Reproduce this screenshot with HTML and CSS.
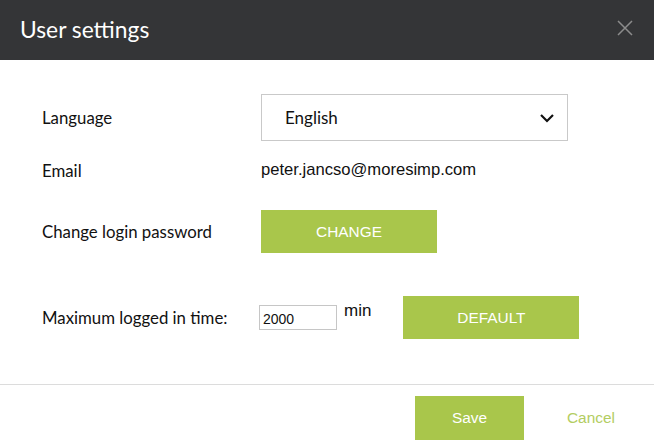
FILE: index.html
```html
<!DOCTYPE html>
<html lang="en">
<head>
    <meta charset="UTF-8">
    <title>User settings</title>
    <link rel="stylesheet" href="styles.css">
</head>
<body>

    <div class="modal">
        <!-- Header -->
        <div class="modal-header">
            <h1>User settings</h1>
            <button class="close" aria-label="Close">
                <svg width="16" height="16" viewBox="0 0 16 16">
                    <path d="M1 1 L15 15 M15 1 L1 15" stroke="#8c8c8c" stroke-width="1.5" fill="none"/>
                </svg>
            </button>
        </div>

        <!-- Settings -->
        <div class="modal-body">
            <div class="row row-language">
                <div class="label">Language</div>
                <div class="select">
                    <span>English</span>
                    <svg width="16" height="10" viewBox="0 0 16 10">
                        <polyline points="2,2 8,8 14,2" stroke="#111" stroke-width="2.2" fill="none"/>
                    </svg>
                </div>
            </div>

            <div class="row row-email">
                <div class="label">Email</div>
                <div class="value">peter.jancso@moresimp.com</div>
            </div>

            <div class="row row-password">
                <div class="label">Change login password</div>
                <button class="btn btn-wide">CHANGE</button>
            </div>

            <div class="row row-time">
                <div class="label">Maximum logged in time:</div>
                <input class="time-input" type="text" value="2000">
                <span class="unit">min</span>
                <button class="btn btn-wide">DEFAULT</button>
            </div>
        </div>

        <!-- Footer -->
        <div class="modal-footer">
            <button class="btn btn-save">Save</button>
            <a class="cancel" href="#">Cancel</a>
        </div>
    </div>

</body>
</html>
```

FILE: styles.css
```css
* {
    margin: 0;
    padding: 0;
    box-sizing: border-box;
}

body {
    font-family: 'Lato', sans-serif;
    background-color: #fff;
    color: #111;
    width: 654px;
    height: 448px;
    overflow: hidden;
}

/* Header */
.modal-header {
    height: 60px;
    background-color: #343537;
    display: flex;
    align-items: center;
    justify-content: space-between;
    padding: 0 21px 0 20px;
}

.modal-header h1 {
    color: #fff;
    font-size: 22.8px;
    font-weight: 400;
    margin-top: -2px;
}

.close {
    background: none;
    border: none;
    width: 16px;
    height: 16px;
    display: flex;
    margin-top: -4px;
}

/* Body */
.modal-body {
    padding: 0 0 45px 42px;
    border-bottom: 1px solid #dcdcdc;
}

.row {
    display: flex;
    align-items: center;
}

.label {
    width: 219px;
    font-size: 16.8px;
}

.row-language {
    margin-top: 34px;
    height: 47px;
}

.select {
    width: 307px;
    height: 47px;
    border: 1px solid #c9c9c9;
    display: flex;
    align-items: center;
    justify-content: space-between;
    padding: 0 12px 0 23px;
    font-size: 17px;
}

.row-email {
    margin-top: 19px;
    height: 20px;
}

.value {
    font-family: 'Liberation Sans', sans-serif;
    font-size: 16.6px;
}

.row-password {
    margin-top: 30px;
    height: 43px;
}

.row-time {
    margin-top: 43px;
    height: 43px;
}

.btn {
    background-color: #a9c64b;
    color: #fff;
    border: none;
    font-family: 'Liberation Sans', sans-serif;
    font-size: 15.4px;
}

.btn-wide {
    width: 176px;
    height: 43px;
}

.time-input {
    width: 78px;
    height: 25px;
    margin-left: -2px;
    border: 1px solid #c6c6c6;
    font-family: 'Liberation Sans', sans-serif;
    font-size: 14px;
    color: #111;
    padding: 2px 3px 0;
    outline: none;
}

.unit {
    font-family: 'Liberation Sans', sans-serif;
    font-size: 17px;
    margin: 0 32px 0 7px;
    align-self: flex-start;
    margin-top: 5px;
}

/* Footer */
.modal-footer {
    display: flex;
    align-items: center;
    padding: 11px 0 0 415px;
}

.btn-save {
    width: 109px;
    height: 44px;
    font-size: 15.4px;
}

.cancel {
    margin-left: 43px;
    color: #b3cd62;
    text-decoration: none;
    font-family: 'Liberation Sans', sans-serif;
    font-size: 15.4px;
}
```
